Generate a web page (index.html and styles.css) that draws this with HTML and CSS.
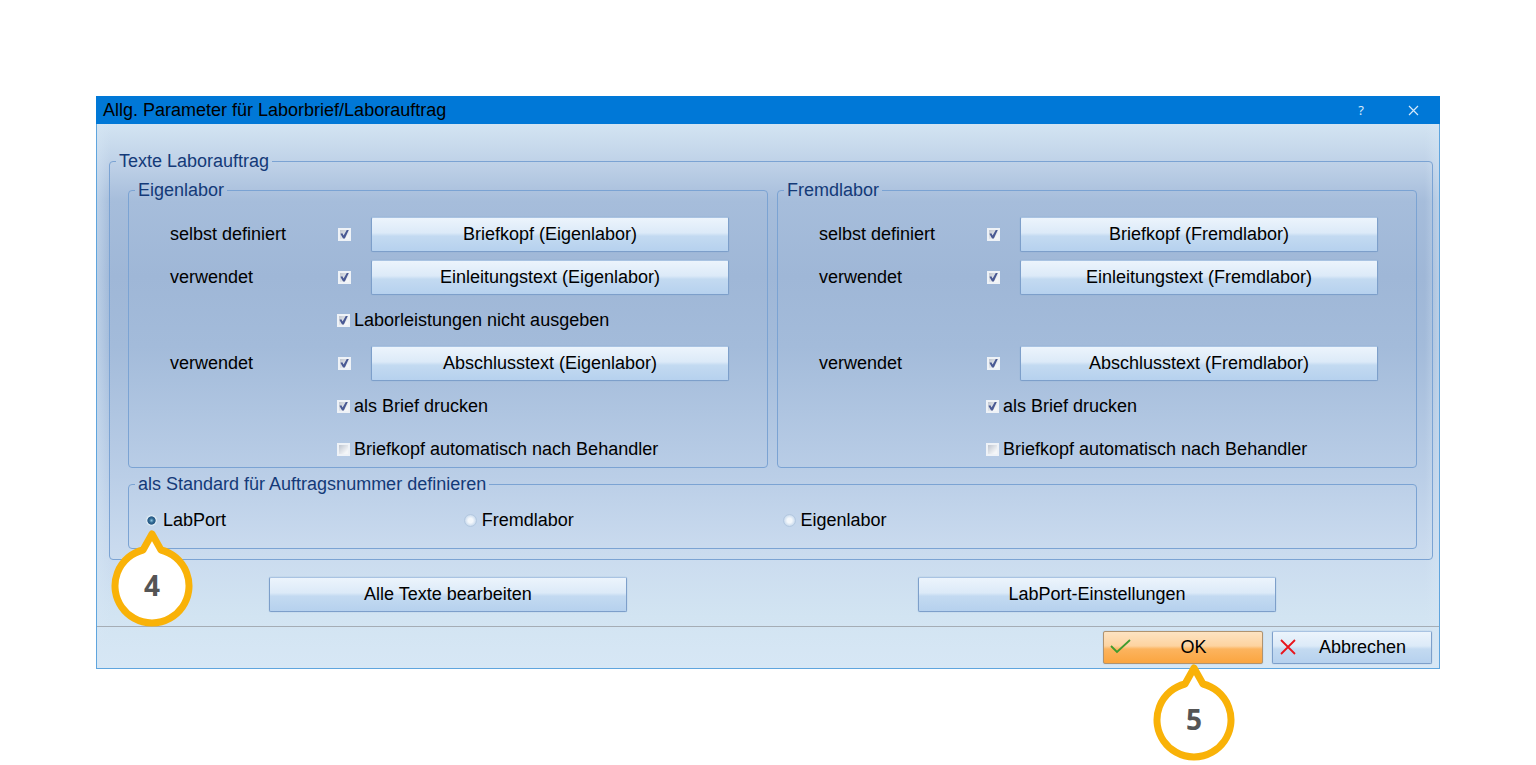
FILE: index.html
```html
<!DOCTYPE html>
<html lang="de">
<head>
  <meta charset="UTF-8" />
  <meta name="viewport" content="width=device-width, initial-scale=1" />
  <title>Allg. Parameter für Laborbrief/Laborauftrag</title>
  <link rel="stylesheet" href="styles.css">
</head>
<body>

<div class="dialog">
  <header class="titlebar">
    <h1>Allg. Parameter für Laborbrief/Laborauftrag</h1>
    <button type="button" class="win-btn" aria-label="Hilfe">?</button>
    <button type="button" class="win-btn" aria-label="Schließen">
      <svg width="11" height="11" viewBox="0 0 11 11"><path d="M1 1L10 10M10 1L1 10" stroke="#d5e9fa" stroke-width="1.2" fill="none"/></svg>
    </button>
  </header>

  <form class="content">
    <fieldset class="texts">
      <legend>Texte Laborauftrag</legend>

      <div class="panels">
        <fieldset>
          <legend>Eigenlabor</legend>
          <div class="rows">
            <label for="e-kopf">selbst definiert</label>
            <input type="checkbox" id="e-kopf" checked>
            <button type="button" class="btn">Briefkopf (Eigenlabor)</button>

            <label for="e-einl">verwendet</label>
            <input type="checkbox" id="e-einl" checked>
            <button type="button" class="btn">Einleitungstext (Eigenlabor)</button>

            <label class="option"><input type="checkbox" checked>Laborleistungen nicht ausgeben</label>

            <label for="e-abschl">verwendet</label>
            <input type="checkbox" id="e-abschl" checked>
            <button type="button" class="btn">Abschlusstext (Eigenlabor)</button>

            <label class="option"><input type="checkbox" checked>als Brief drucken</label>
            <label class="option"><input type="checkbox">Briefkopf automatisch nach Behandler</label>
          </div>
        </fieldset>

        <fieldset>
          <legend>Fremdlabor</legend>
          <div class="rows">
            <label for="f-kopf">selbst definiert</label>
            <input type="checkbox" id="f-kopf" checked>
            <button type="button" class="btn">Briefkopf (Fremdlabor)</button>

            <label for="f-einl">verwendet</label>
            <input type="checkbox" id="f-einl" checked>
            <button type="button" class="btn">Einleitungstext (Fremdlabor)</button>

            <div class="empty"></div>

            <label for="f-abschl">verwendet</label>
            <input type="checkbox" id="f-abschl" checked>
            <button type="button" class="btn">Abschlusstext (Fremdlabor)</button>

            <label class="option"><input type="checkbox" checked>als Brief drucken</label>
            <label class="option"><input type="checkbox">Briefkopf automatisch nach Behandler</label>
          </div>
        </fieldset>
      </div>

      <fieldset class="standard">
        <legend>als Standard für Auftragsnummer definieren</legend>
        <div class="radios">
          <div class="radio">
            <label><input type="radio" name="standard" checked>LabPort</label>
            <div class="callout callout-radio">
              <svg width="82" height="98" viewBox="0 0 82 98"><path d="M32 20L41 4L50 20A37 37 0 1 1 32 20Z" fill="#fff" stroke="#f9b208" stroke-width="7" stroke-linejoin="round"/></svg>
              <span>4</span>
            </div>
          </div>
          <div class="radio"><label><input type="radio" name="standard">Fremdlabor</label></div>
          <div class="radio"><label><input type="radio" name="standard">Eigenlabor</label></div>
        </div>
      </fieldset>
    </fieldset>

    <div class="actions">
      <button type="button" class="btn">Alle Texte bearbeiten</button>
      <button type="button" class="btn">LabPort-Einstellungen</button>
    </div>
  </form>

  <footer>
    <div class="ok">
      <button type="button" class="btn btn-icon btn-ok">
        <svg width="21" height="18" viewBox="0 0 21 18"><path d="M1 8L7 14L20 2" stroke="#3f9c2e" stroke-width="1.8" fill="none"/></svg>
        <span>OK</span>
      </button>
      <div class="callout callout-ok">
        <svg width="82" height="98" viewBox="0 0 82 98"><path d="M32 20L41 4L50 20A37 37 0 1 1 32 20Z" fill="#fff" stroke="#f9b208" stroke-width="7" stroke-linejoin="round"/></svg>
        <span>5</span>
      </div>
    </div>
    <button type="button" class="btn btn-icon">
      <svg width="21" height="18" viewBox="0 0 21 18"><path d="M2 2L16 16M16 2L2 16" stroke="#e8141c" stroke-width="1.8" fill="none"/></svg>
      <span>Abbrechen</span>
    </button>
  </footer>
</div>

</body>
</html>
```

FILE: styles.css
```css
* {
  box-sizing: border-box;
}

body {
  margin: 0;
  padding: 96px;
  background: #fff;
  color: #000;
  font-family: "Liberation Sans", Arial, sans-serif;
  font-size: 18px;
  line-height: 20px;
}

.dialog {
  border: 1px solid #5fa5de;
  border-top: none;
  background:
    linear-gradient(90deg, rgba(214, 230, 244, 0.5), rgba(214, 230, 244, 0) 14px),
    linear-gradient(270deg, rgba(214, 230, 244, 0.5), rgba(214, 230, 244, 0) 14px),
    linear-gradient(#d3e4f2 28px, #bccfe6 72px, #a6bddb 105px, #9fb7d7 180px, #a3bbda 250px, #bacee7 380px, #c9daee 450px, #d2e4f2 520px, #d7e7f5 100%);
}

/* title bar */
.titlebar {
  display: flex;
  align-items: center;
  height: 28px;
  margin: 0 -1px;
  padding: 0 1px 0 7px;
  background: #0078d7;
}

.titlebar h1 {
  flex: 1;
  margin: 0;
  font-size: 18px;
  font-weight: normal;
}

.win-btn {
  display: flex;
  align-items: center;
  justify-content: center;
  width: 52px;
  height: 28px;
  padding: 0;
  border: none;
  background: none;
  color: #d5e9fa;
  font-family: "Noto Sans", sans-serif;
  font-size: 13px;
}

/* group boxes */
.content {
  padding: 27px 6px 14px 12px;
}

fieldset {
  min-width: 0;
  margin: 0;
  padding: 0 6px;
  border: 1px solid #7ba3d3;
  border-radius: 4px;
}

legend {
  padding: 0 3px;
  color: #143a78;
}

.texts {
  padding-bottom: 10px;
}

.panels {
  display: grid;
  grid-template-columns: 1fr 1fr;
  gap: 9px;
  margin: 9px 9px 6px 12px;
}

.rows {
  display: grid;
  grid-template-columns: 168px 33px 1fr;
  grid-auto-rows: 34px;
  align-items: center;
  row-gap: 9px;
  padding: 17px 32px 1px 35px;
}

.option {
  display: flex;
  align-items: center;
  grid-column: 2 / 4;
  gap: 4px;
  margin-left: -1px;
}

.empty {
  grid-column: 1 / 4;
}

.standard {
  margin: 0 9px 0 12px;
}

.radios {
  display: flex;
  padding: 16px 0 17px;
}

.radio {
  position: relative;
  width: 25%;
  padding-left: 10px;
}

.radio label {
  display: inline-flex;
  align-items: center;
  gap: 5px;
}

/* check boxes and radio buttons */
input {
  flex: none;
  appearance: none;
  width: 13px;
  height: 13px;
  margin: 0;
}

input[type="checkbox"] {
  border: 2px solid #eef2f7;
  background: linear-gradient(135deg, #bfc5cf, #f4f6f8 80%);
}

input[type="checkbox"]:checked::before {
  content: "";
  display: block;
  width: 9px;
  height: 9px;
  background: #4a5a94;
  clip-path: polygon(4% 46%, 26% 42%, 40% 66%, 78% 0, 100% 0, 54% 100%, 34% 100%);
}

input[type="radio"] {
  border: 1px solid #b3c8e0;
  border-radius: 50%;
  background: radial-gradient(circle, #f4f8fc 30%, #c6d8ec 75%);
}

input[type="radio"]:checked {
  border-color: #c5d8ea;
  background: radial-gradient(circle at 50% 50%, #8fc3df 0, #2c6690 30%, #2a5a86 48%, #dce9f4 58%);
}

/* buttons */
.btn {
  height: 35px;
  padding: 0 6px;
  border: 1px solid #7d9fca;
  border-top-color: #a9c3e2;
  border-radius: 2px;
  background: linear-gradient(#ecf4fc, #dceaf8 45%, #c3daf1 55%, #b6d1ee);
  box-shadow: 0 0 1px #7d9fca;
  color: #000;
  font: inherit;
}

.actions {
  display: grid;
  grid-template-columns: 1fr 1fr;
  justify-items: center;
  gap: 9px;
  margin: 17px 16px 0 19px;
}

.actions .btn {
  width: 56%;
}

footer {
  display: flex;
  justify-content: flex-end;
  gap: 9px;
  padding: 4px 7px 4px 6px;
  border-top: 1px solid #a5adb5;
}

.btn-icon {
  display: flex;
  align-items: center;
  width: 160px;
  height: 33px;
}

.btn-icon span {
  flex: 1;
  text-align: center;
}

.btn-ok {
  border-color: #b0936f;
  background: linear-gradient(#fde3c2, #fdd3a0 45%, #fcb45f 55%, #fba53f);
}

.ok {
  position: relative;
}

/* numbered callouts */
.callout {
  position: absolute;
  z-index: 1;
  width: 82px;
  height: 98px;
  pointer-events: none;
}

.callout svg {
  display: block;
}

.callout span {
  position: absolute;
  top: 38px;
  left: 0;
  width: 100%;
  color: #555;
  font-family: "Noto Sans", sans-serif;
  font-size: 28px;
  font-weight: bold;
  line-height: 34px;
  text-align: center;
}

.callout-radio {
  top: 20px;
  left: -24px;
}

.callout-ok {
  top: 33px;
  left: 50px;
}
```
